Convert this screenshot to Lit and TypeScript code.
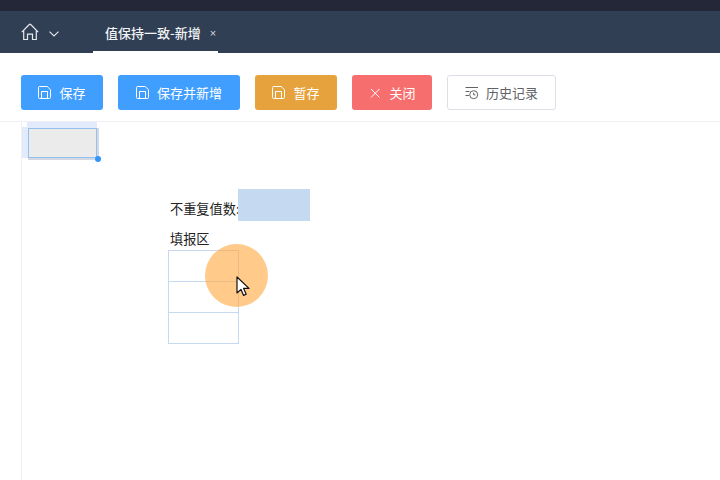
import { LitElement, html, css } from "lit";
import { customElement } from "lit/decorators.js";

const saveIcon = html`<svg class="ico" viewBox="0 0 14 14" fill="none" stroke="currentColor" stroke-width="1">
  <path d="M.5 1.6A1.1 1.1 0 0 1 1.6.5h7.6l3.3 3.2v7.7a1.1 1.1 0 0 1-1.1 1.1H1.6a1.1 1.1 0 0 1-1.1-1.1z" />
  <path d="M3.5 12.5V5.5h6v7" />
</svg>`;

const closeIcon = html`<svg class="ico" viewBox="0 0 14 14" fill="none" stroke="currentColor" stroke-width="1">
  <path d="M3 3l8.5 8.5M11.5 3L3 11.5" />
</svg>`;

const historyIcon = html`<svg class="ico" viewBox="0 0 14 14" fill="none" stroke="currentColor" stroke-width="1">
  <path d="M.5 1.5H13M.5 5.5h4M.5 9.500h3.500" />
  <circle cx="8.7" cy="8.7" r="4" />
  <path d="M8.7 6.700v2.200h1.700" />
</svg>`;

@customElement("app-root")
export class AppRoot extends LitElement {
  static styles = css`
    :host {
      display: block;
      width: 720px;
      height: 480px;
      overflow: hidden;
      background: #fff;
      font-family: "Noto Sans CJK SC", "Noto Sans", sans-serif;
      color: #303133;
    }
    .topline {
      height: 11px;
      background: #232737;
    }
    .tabbar {
      height: 42px;
      background: #303f54;
      display: flex;
      align-items: stretch;
      padding-left: 21px;
      color: #fff;
    }
    .home {
      display: flex;
      align-items: center;
      gap: 10px;
      width: 72px;
      color: #e6e9ed;
    }
    .home svg {
      display: block;
    }
    .home .chev {
      margin-top: 3px;
    }
    .tab {
      width: 125px;
      height: 42px;
      box-sizing: border-box;
      padding: 2px 0 0 12px;
      display: flex;
      align-items: center;
      gap: 9px;
      font-size: 13px;
      font-weight: 500;
      color: #f1f3f5;
      border-bottom: 2px solid #fff;
    }
    .tab .x {
      font-size: 11px;
      line-height: 11px;
      padding-top: 3px;
      color: #d5d9de;
      font-family: "Liberation Sans", sans-serif;
    }
    .toolbar {
      height: 69px;
      box-sizing: border-box;
      display: flex;
      gap: 15px;
      padding: 22px 0 0 21px;
      border-bottom: 1px solid #eef0f3;
    }
    .btn {
      height: 35px;
      box-sizing: border-box;
      border-radius: 3px;
      display: flex;
      align-items: center;
      justify-content: center;
      gap: 7px;
      font-size: 13px;
      color: #fff;
    }
    .ico {
      width: 14px;
      height: 14px;
      flex: none;
    }
    .blue {
      background: #409eff;
    }
    .orange {
      background: #e6a23c;
    }
    .red {
      background: #f76e6f;
    }
    .plain {
      background: #fff;
      border: 1px solid #dcdfe6;
      color: #606266;
    }
    .w82 {
      width: 82px;
    }
    .w122 {
      width: 122px;
    }
    .w80 {
      width: 80px;
    }
    .w109 {
      width: 109px;
    }
    .sheet {
      position: relative;
      height: 358px;
      margin-left: 21px;
      border-left: 1px solid #eef0f3;
    }
    .colhead {
      position: absolute;
      left: 5px;
      top: 0;
      width: 70px;
      height: 6px;
      background: #e2ebfb;
    }
    .rowhead {
      position: absolute;
      left: 0;
      top: 5px;
      width: 6px;
      height: 31px;
      background: #e2ebfb;
    }
    .selected {
      position: absolute;
      left: 6px;
      top: 6px;
      width: 69px;
      height: 30px;
      box-sizing: border-box;
      background: #ebebeb;
      border: 1px solid #95c0ee;
      box-shadow: 1px 1px 0 1px #d3d9e4;
    }
    .handle {
      position: absolute;
      left: 73px;
      top: 34px;
      width: 6px;
      height: 6px;
      border-radius: 50%;
      background: #3295f8;
    }
    .label {
      position: absolute;
      font-size: 13.2px;
      line-height: 18px;
      color: #222;
      white-space: nowrap;
    }
    .unique {
      left: 148px;
      top: 78px;
    }
    .fill {
      left: 148px;
      top: 108px;
    }
    .value {
      position: absolute;
      left: 216px;
      top: 67px;
      width: 72px;
      height: 32px;
      background: #c5d9f1;
    }
    .cells {
      position: absolute;
      left: 146px;
      top: 128px;
      width: 71px;
      display: grid;
      grid-auto-rows: 31px;
      border: 1px solid #c5d9f1;
      border-top: 0;
      box-sizing: border-box;
    }
    .cells div {
      border-top: 1px solid #c5d9f1;
    }
    .spot {
      position: absolute;
      left: 183px;
      top: 122px;
      width: 63px;
      height: 63px;
      border-radius: 50%;
      background: rgba(255, 166, 60, 0.6);
    }
    .cursor {
      position: absolute;
      left: 214px;
      top: 154px;
    }
  `;

  render() {
    return html`
      <div class="topline"></div>
      <div class="tabbar">
        <div class="home">
          <svg width="18" height="18" viewBox="0 0 18 18" fill="none" stroke="currentColor" stroke-width="1.2">
            <path d="M.8 9.2 8.3 1.5a1 1 0 0 1 1.4 0l7.500 7.700M2.700 7.500v9h3.800v-5.300h5v5.300h3.800v-9" />
          </svg>
          <svg class="chev" width="10" height="6" viewBox="0 0 10 6" fill="none" stroke="currentColor" stroke-width="1.1">
            <path d="M.5.7 5 5 9.500.7" />
          </svg>
        </div>
        <div class="tab"><span>值保持一致-新增</span><span class="x">×</span></div>
      </div>
      <div class="toolbar">
        <div class="btn blue w82">${saveIcon}<span>保存</span></div>
        <div class="btn blue w122">${saveIcon}<span>保存并新增</span></div>
        <div class="btn orange w82">${saveIcon}<span>暂存</span></div>
        <div class="btn red w80">${closeIcon}<span>关闭</span></div>
        <div class="btn plain w109">${historyIcon}<span>历史记录</span></div>
      </div>
      <div class="sheet">
        <div class="colhead"></div>
        <div class="rowhead"></div>
        <div class="selected"></div>
        <div class="handle"></div>
        <div class="label unique">不重复值数:</div>
        <div class="value"></div>
        <div class="label fill">填报区</div>
        <div class="cells"><div></div><div></div><div></div></div>
        <div class="spot"></div>
        <svg class="cursor" width="15" height="22" viewBox="0 0 15 22">
          <path d="M1 1v16l4-3.6 2.6 6 2.6-1.2-2.6-5.8h5.4z" fill="#fff" stroke="#111" stroke-width="1.2" stroke-linejoin="round" />
        </svg>
      </div>
    `;
  }
}
